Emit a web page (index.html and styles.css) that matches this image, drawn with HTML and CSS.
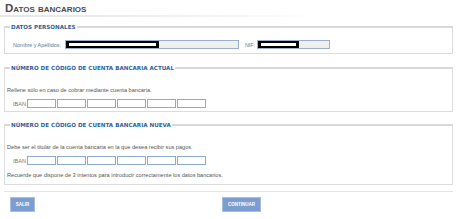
FILE: index.html
```html
<!DOCTYPE html>
<html lang="es">
<head>
  <meta charset="UTF-8">
  <title>Datos bancarios</title>
  <link rel="stylesheet" href="styles.css">
</head>
<body>
  <!-- Cabecera -->
  <h1 class="titulo">Datos bancarios</h1>
  <div class="titulo-linea"></div>

  <!-- Datos personales -->
  <fieldset class="bloque bloque-personal">
    <legend>DATOS PERSONALES</legend>
    <div class="fila">
      <label class="etiqueta-nombre">Nombre y Apellidos:</label>
      <div class="campo campo-nombre"><span class="tapado tapado-nombre"></span></div>
      <label class="etiqueta-nif">NIF:</label>
      <div class="campo campo-nif"><span class="tapado tapado-nif"></span></div>
    </div>
  </fieldset>

  <!-- Cuenta actual -->
  <fieldset class="bloque bloque-actual">
    <legend>NÚMERO DE CÓDIGO DE CUENTA BANCARIA ACTUAL</legend>
    <p class="nota">Rellene sólo en caso de cobrar mediante cuenta bancaria.</p>
    <div class="iban">
      <label>IBAN</label>
      <input type="text"><input type="text"><input type="text"><input type="text"><input type="text"><input type="text">
    </div>
  </fieldset>

  <!-- Cuenta nueva -->
  <fieldset class="bloque bloque-nueva">
    <legend>NÚMERO DE CÓDIGO DE CUENTA BANCARIA NUEVA</legend>
    <p class="nota">Debe ser el titular de la cuenta bancaria en la que desea recibir sus pagos.</p>
    <div class="iban">
      <label>IBAN</label>
      <input type="text"><input type="text"><input type="text"><input type="text"><input type="text"><input type="text">
    </div>
    <p class="nota nota-final">Recuerde que dispone de 3 intentos para introducir correctamente los datos bancarios.</p>
  </fieldset>

  <div class="separador"></div>

  <div class="botones">
    <button class="btn btn-salir">SALIR</button>
    <button class="btn btn-continuar">CONTINUAR</button>
  </div>
</body>
</html>
```

FILE: styles.css
```css
body {
  margin: 0;
  background: #fff;
  font-family: "Liberation Sans", Arial, sans-serif;
  color: #555;
}

.titulo {
  margin: 0;
  padding: 3px 0 0 5px;
  height: 11px;
  font-size: 11.5px;
  line-height: 11px;
  font-variant: small-caps;
  font-weight: bold;
  color: #4a4a4a;
}
.titulo-linea {
  margin-top: 1px;
  width: 320px;
  height: 2px;
  background: linear-gradient(to right, #e6e6e6, #f4f4f4 70%, #fff);
}

.bloque {
  margin: 0 7px 0 4px;
  padding: 0 8px;
  border: 1px solid #dcdcdc;
  border-top: 2px solid #d8d8d8;
}
.bloque legend {
  padding: 0 1px;
  margin-left: -3px;
  font-family: "DejaVu Sans", Verdana, sans-serif;
  font-size: 5.6px;
  font-weight: bold;
  color: #2f5f9e;
  line-height: 8px;
}
.bloque-personal {
  margin-top: 6px;
  height: 28px;
}
.bloque-actual {
  margin-top: 10px;
  height: 45px;
}
.bloque-nueva {
  margin-top: 9px;
  height: 61px;
}

.fila {
  display: flex;
  align-items: center;
  margin-top: 9px;
  font-size: 5.4px;
  color: #6a7a8a;
}
.etiqueta-nombre {
  margin-right: 4px;
}
.campo {
  display: flex;
  height: 7px;
  border: 1px solid #9ab0cc;
  background: #efefef;
}
.campo-nombre { width: 172px; }
.campo-nif { width: 71px; }
.etiqueta-nif {
  margin-left: 6px;
  margin-right: 2px;
}
.tapado {
  box-sizing: border-box;
  height: 7px;
  border: 2px solid #000;
  border-left-width: 3px;
  border-right-width: 3px;
  background: #fff;
}
.tapado-nombre { width: 93px; }
.tapado-nif { width: 41px; }

.nota {
  margin: 14px 0 0 -6px;
  font-size: 5.6px;
  line-height: 8px;
  color: #555;
}
.nota-final {
  margin-top: 6px;
}

.iban {
  display: flex;
  align-items: center;
  margin-top: 5px;
  font-size: 5.6px;
  color: #777;
}
.iban label {
  margin-right: 1px;
}
.iban input {
  box-sizing: border-box;
  width: 29px;
  height: 9px;
  margin: 0 1px 0 0;
  padding: 0;
  border: 1px solid #8ea9d2;
  background: #fff;
}

.separador {
  margin: 6px 7px 0 4px;
  height: 1px;
  background: #e4e4e4;
}

.botones {
  display: flex;
  padding: 5px 0 0 10px;
}
.btn {
  height: 15px;
  padding: 0;
  border: 1px solid #a9bde0;
  background: #7c9dd1;
  color: #fff;
  font-family: "Liberation Sans", Arial, sans-serif;
  font-size: 4.5px;
  font-weight: bold;
}
.btn-salir { width: 25px; }
.btn-continuar {
  width: 39px;
  margin-left: 187px;
}
```
